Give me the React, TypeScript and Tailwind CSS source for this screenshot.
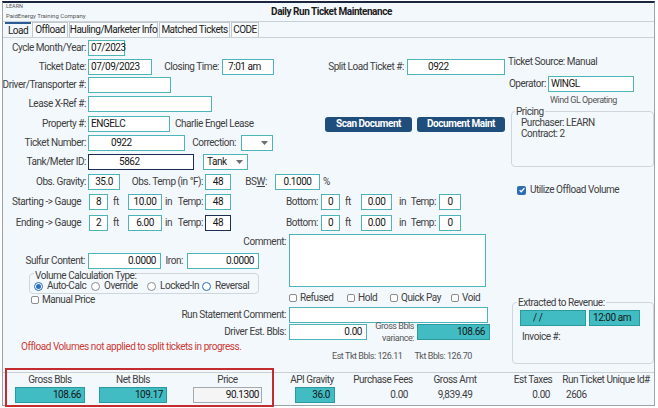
import React from "react";

type P = { cls?: string; children?: React.ReactNode };

const Lbl = ({ cls = "", children }: P) => (
  <div className={`shrink-0 flex items-center justify-end whitespace-nowrap ${cls}`}>{children}</div>
);

type InP = P & { v?: "w" | "dark" | "teal" | "gray" };
const In = ({ cls = "", v = "w", children }: InP) => {
  const skin =
    v === "teal"
      ? "bg-[#42bcc3] border-[#2a99a0]"
      : v === "dark"
      ? "bg-white border-[#1e2d52]"
      : v === "gray"
      ? "bg-[#f5f5f5] border-[#a3a9ae]"
      : "bg-white border-[#4db5b9]";
  return (
    <div className={`shrink-0 h-[16px] border flex items-center whitespace-nowrap text-[#161616] ${skin} ${cls}`}>
      {children}
    </div>
  );
};

const Arrow = () => (
  <svg width="7" height="4" viewBox="0 0 7 4" className="shrink-0">
    <path d="M0 0h7L3.5 4z" fill="#6b6b6b" />
  </svg>
);

const Btn = ({ cls = "", children }: P) => (
  <div
    className={`shrink-0 h-[15px] rounded-[3px] bg-[#1f4e7c] text-white font-bold flex items-center justify-center whitespace-nowrap ${cls}`}
  >
    {children}
  </div>
);

const Radio = ({ cls = "", on = false, ring = false, children }: P & { on?: boolean; ring?: boolean }) => (
  <div className={`shrink-0 flex items-center whitespace-nowrap ${cls}`}>
    <div
      className={`w-[9px] h-[9px] rounded-full border bg-white flex items-center justify-center ${
        on || ring ? "border-[#2a6fc0]" : "border-[#8d8d8d]"
      }`}
    >
      {on && <div className="w-[5px] h-[5px] rounded-full bg-[#2a6fc0]" />}
    </div>
    <span className="ml-[4px]">{children}</span>
  </div>
);

const Chk = ({ cls = "", children }: P) => (
  <div className={`shrink-0 flex items-center whitespace-nowrap ${cls}`}>
    <div className="w-[8px] h-[8px] rounded-[2px] border border-[#8d8d8d] bg-white" />
    <span className="ml-[3px]">{children}</span>
  </div>
);

const Tab = ({ cls = "", children }: P) => (
  <div
    className={`shrink-0 h-[15px] border-t border-x border-[#c2c8ce] bg-[#f8fafc] flex items-center justify-center whitespace-nowrap text-[#222] ${cls}`}
  >
    {children}
  </div>
);

const GaugeRow = ({ name, ft, inch, temp, dark, cls }: { name: string; ft: string; inch: string; temp: string; dark?: boolean; cls: string }) => (
  <div className={`h-[16px] flex items-center ${cls}`}>
    <Lbl cls="w-[78px]">{name}</Lbl>
    <In cls="ml-[8px] w-[19px] justify-center">{ft}</In>
    <span className="ml-[5px] w-[10px] shrink-0">ft</span>
    <In cls="ml-[5px] w-[34px] justify-center">{inch}</In>
    <span className="ml-[3px] w-[12px] shrink-0">in</span>
    <Lbl cls="w-[26px]">Temp:</Lbl>
    <In v={dark ? "dark" : "w"} cls="ml-[2px] w-[26px] justify-center">
      {temp}
    </In>
    <Lbl cls="w-[87px]">Bottom:</Lbl>
    <In cls="ml-[3px] w-[19px] justify-center">0</In>
    <span className="ml-[5px] w-[11px] shrink-0">ft</span>
    <In cls="ml-[5px] w-[31px] justify-center">0.00</In>
    <span className="ml-[7px] w-[12px] shrink-0">in</span>
    <Lbl cls="w-[25px]">Temp:</Lbl>
    <In cls="ml-[3px] w-[22px] justify-center">0</In>
  </div>
);

export default function App() {
  return (
    <div className="w-[658px] h-[408px] bg-white relative overflow-hidden font-['Roboto',sans-serif] tracking-[-0.45px] text-[10px] leading-[12px] text-[#404040]">
      <div className="ml-[2px] mt-[1px] w-[653px] h-[405px] bg-[#f3f8fc] border-t-2 border-t-[#1d2640] border-x border-x-[#9ca3ab] border-b border-b-[#9ca3ab] flex flex-col">
        {/* header */}
        <div className="h-[19px] shrink-0 border-b border-[#c9d0d8] grid grid-cols-[1fr_auto_1fr]">
          <div className="pl-[3px] flex flex-col text-[#555] tracking-normal">
            <div className="text-[5.5px] leading-[7px]">LEARN</div>
            <div className="text-[6px] leading-[8px] mt-[2px] whitespace-nowrap">PaidEnergy Training Company</div>
          </div>
          <div className="pl-[6px] flex items-center font-bold text-[10px] tracking-[-0.45px] text-[#1b1b1b] whitespace-nowrap">
            Daily Run Ticket Maintenance
          </div>
          <div />
        </div>

        {/* tabs */}
        <div className="h-[16px] shrink-0 border-b border-[#c9d0d8] flex items-end tracking-[-0.5px]">
          <div className="ml-[2px] w-[26px] h-[15px] border-t-2 border-[#2b5c94] flex items-center justify-center text-[#222]">
            Load
          </div>
          <Tab cls="ml-[1px] w-[36px]">Offload</Tab>
          <Tab cls="ml-[1px] w-[89px]">Hauling/Marketer Info</Tab>
          <Tab cls="ml-[1px] w-[71px]">Matched Tickets</Tab>
          <Tab cls="ml-[1px] w-[28px]">CODE</Tab>
        </div>

        {/* form */}
        <div className="h-[334px] shrink-0 flex">
          {/* left column */}
          <div className="w-[505px] shrink-0 flex flex-col">
            <div className="mt-[2px] h-[16px] flex items-center">
              <Lbl cls="w-[83px]">Cycle Month/Year:</Lbl>
              <In cls="ml-[2px] w-[37px] pl-[2px]">07/2023</In>
            </div>
            <div className="mt-[3px] h-[16px] flex items-center">
              <Lbl cls="w-[83px]">Ticket Date:</Lbl>
              <In cls="ml-[2px] w-[64px] pl-[2px]">07/09/2023</In>
              <Lbl cls="w-[67px]">Closing Time:</Lbl>
              <In cls="ml-[3px] w-[52px] pl-[5px]">7:01 am</In>
              <Lbl cls="w-[130px]">Split Load Ticket #:</Lbl>
              <In cls="ml-[3px] w-[98px] pl-[20px]">0922</In>
            </div>
            <div className="mt-[2px] h-[16px] flex items-center">
              <Lbl cls="w-[83px]">Driver/Transporter #:</Lbl>
              <In cls="ml-[2px] w-[83px]" />
            </div>
            <div className="mt-[3px] h-[16px] flex items-center">
              <Lbl cls="w-[83px]">Lease X-Ref #:</Lbl>
              <In cls="ml-[2px] w-[124px]" />
            </div>
            <div className="mt-[4px] h-[16px] flex items-center">
              <Lbl cls="w-[83px]">Property #:</Lbl>
              <In cls="ml-[2px] w-[82px] pl-[2px]">ENGELC</In>
              <div className="ml-[5px] w-[150px] shrink-0 whitespace-nowrap">Charlie Engel Lease</div>
              <Btn cls="w-[87px]">Scan Document</Btn>
              <Btn cls="ml-[5px] w-[88px]">Document Maint</Btn>
            </div>
            <div className="mt-[3px] h-[16px] flex items-center">
              <Lbl cls="w-[83px]">Ticket Number:</Lbl>
              <In cls="ml-[2px] w-[97px] pl-[22px]">0922</In>
              <Lbl cls="w-[51px]">Correction:</Lbl>
              <In cls="ml-[5px] w-[32px] justify-end pr-[4px]">
                <Arrow />
              </In>
            </div>
            <div className="mt-[3px] h-[16px] flex items-center">
              <Lbl cls="w-[83px]">Tank/Meter ID:</Lbl>
              <In v="dark" cls="ml-[2px] w-[106px] pl-[30px]">
                5862
              </In>
              <In cls="ml-[9px] w-[45px] pl-[3px] pr-[4px] justify-between">
                <span>Tank</span>
                <Arrow />
              </In>
            </div>
            <div className="mt-[4px] h-[16px] flex items-center">
              <Lbl cls="w-[83px]">Obs. Gravity:</Lbl>
              <In cls="ml-[2px] w-[32px] justify-center">35.0</In>
              <Lbl cls="w-[83px]">Obs. Temp (in °F):</Lbl>
              <In cls="ml-[2px] w-[26px] justify-center">48</In>
              <Lbl cls="w-[36px]">
                BS<span className="underline">W</span>:
              </Lbl>
              <In cls="ml-[8px] w-[45px] justify-center">0.1000</In>
              <span className="ml-[3px]">%</span>
            </div>
            <GaugeRow cls="mt-[4px]" name="Starting -> Gauge" ft="8" inch="10.00" temp="48" />
            <GaugeRow cls="mt-[5px]" name="Ending -> Gauge" ft="2" inch="6.00" temp="48" dark />

            {/* block A */}
            <div className="mt-[3px] flex">
              <div className="w-[283px] shrink-0 flex flex-col">
                <Lbl cls="h-[16px]">Comment:</Lbl>
                <div className="mt-[3px] h-[16px] flex items-center">
                  <Lbl cls="w-[82px]">Sulfur Content:</Lbl>
                  <In cls="ml-[3px] w-[73px] justify-end pr-[4px]">0.0000</In>
                  <Lbl cls="w-[22px]">Iron:</Lbl>
                  <In cls="ml-[4px] w-[72px] justify-end pr-[4px]">0.0000</In>
                </div>
                <div className="mt-[4px] ml-[26px] w-[230px] h-[21px] shrink-0 relative border border-[#cfd6dd] rounded-[4px] flex items-end pb-[1px] pl-[4px]">
                  <div className="absolute top-[-4px] left-[4px] px-[1px] bg-[#f3f8fc] leading-[11px] whitespace-nowrap">
                    Volume Calculation Type:
                  </div>
                  <div className="h-[12px] flex items-center">
                    <Radio on cls="w-[57px]">Auto-Calc</Radio>
                    <Radio cls="w-[56px]">Override</Radio>
                    <Radio cls="w-[55px]">Locked-In</Radio>
                    <Radio ring>Reversal</Radio>
                  </div>
                </div>
                <Chk cls="mt-[1px] ml-[28px] h-[10px]">Manual Price</Chk>
              </div>
              <div className="flex flex-col">
                <div className="ml-[3px] w-[197px] h-[53px] bg-white border border-[#4db5b9]" />
                <div className="mt-[6px] h-[10px] flex items-center">
                  <Chk cls="ml-[3px] w-[58px]">Refused</Chk>
                  <Chk cls="w-[43px]">Hold</Chk>
                  <Chk cls="w-[61px]">Quick Pay</Chk>
                  <Chk>Void</Chk>
                </div>
              </div>
            </div>

            {/* block B */}
            <div className="mt-[2px] h-[16px] flex items-center">
              <Lbl cls="w-[283px]">Run Statement Comment:</Lbl>
              <In cls="ml-[3px] w-[199px]" />
            </div>
            <div className="mt-[1px] h-[16px] flex items-center">
              <Lbl cls="w-[283px]">Driver Est. Bbls:</Lbl>
              <In cls="ml-[3px] w-[78px] justify-end pr-[4px]">0.00</In>
              <div className="w-[47px] shrink-0 flex flex-col items-end text-[9px] leading-[12px] text-[#555] whitespace-nowrap">
                <span>Gross Bbls</span>
                <span>variance:</span>
              </div>
              <In v="teal" cls="ml-[3px] w-[73px] h-[15px] justify-end pr-[4px]">
                108.66
              </In>
            </div>
            <div className="flex items-start">
              <div className="mt-[1px] ml-[18px] w-[311px] shrink-0 text-[#cc3a36] whitespace-nowrap">
                Offload Volumes not applied to split tickets in progress.
              </div>
              <div className="mt-[10px] text-[9px] text-[#555] whitespace-nowrap">
                <span>Est Tkt Bbls: 126.11</span>
                <span className="ml-[12px]">Tkt Bbls: 126.70</span>
              </div>
            </div>
          </div>

          {/* right column */}
          <div className="w-[146px] shrink-0 flex flex-col">
            <div className="mt-[18px] h-[12px] whitespace-nowrap">Ticket Source: Manual</div>
            <div className="mt-[8px] h-[16px] flex items-center">
              <Lbl cls="w-[38px]">Operator:</Lbl>
              <In cls="ml-[2px] w-[86px] pl-[2px]">WINGL</In>
            </div>
            <div className="mt-[3px] h-[10px] ml-[42px] text-[9px] leading-[10px] text-[#555] whitespace-nowrap">
              Wind GL Operating
            </div>
            <div className="mt-[6px] ml-[3px] w-[143px] h-[56px] relative border border-[#cfd6dd] rounded-[4px] flex flex-col pl-[9px] pt-[5px] leading-[11px]">
              <div className="absolute top-[-6px] left-[3px] px-[1px] bg-[#f3f8fc] leading-[11px]">Pricing</div>
              <span>Purchaser: LEARN</span>
              <span>Contract: 2</span>
            </div>
            <div className="mt-[18px] ml-[9px] h-[10px] flex items-center whitespace-nowrap">
              <div className="w-[9px] h-[9px] rounded-[2px] bg-[#2d6db5] flex items-center justify-center">
                <svg viewBox="0 0 10 10" width="8" height="8">
                  <path d="M2 5.2l2 2L8 2.8" stroke="white" strokeWidth="1.6" fill="none" />
                </svg>
              </div>
              <span className="ml-[4px]">Utilize Offload Volume</span>
            </div>
            <div className="mt-[107px] ml-[4px] w-[142px] h-[62px] relative border border-[#cfd6dd] rounded-[4px] flex flex-col pl-[7px] pt-[7px]">
              <div className="absolute top-[-6px] left-[4px] px-[1px] bg-[#f3f8fc] leading-[11px] whitespace-nowrap">
                Extracted to Revenue:
              </div>
              <div className="flex">
                <In v="teal" cls="w-[66px] h-[15px] pl-[12px]">
                  / /
                </In>
                <In v="teal" cls="ml-[3px] w-[51px] h-[15px] pl-[3px]">
                  12:00 am
                </In>
              </div>
              <div className="mt-[4px] ml-[2px] h-[13px] flex items-center">Invoice #:</div>
            </div>
          </div>
        </div>

        {/* bottom summary */}
        <div className="flex-1 border-t border-[#c9d0d8] flex">
          <div className="ml-[12px] w-[70px] shrink-0 flex flex-col">
            <div className="mt-[1px] h-[12px] flex justify-center whitespace-nowrap">Gross Bbls</div>
            <In v="teal" cls="mt-[1px] h-[15px] justify-end pr-[3px]">
              108.66
            </In>
          </div>
          <div className="ml-[14px] w-[68px] shrink-0 flex flex-col">
            <div className="mt-[1px] h-[12px] flex justify-center whitespace-nowrap">Net Bbls</div>
            <In v="teal" cls="mt-[1px] h-[15px] justify-end pr-[3px]">
              109.17
            </In>
          </div>
          <div className="ml-[26px] w-[69px] shrink-0 flex flex-col">
            <div className="mt-[1px] h-[12px] flex justify-center whitespace-nowrap">Price</div>
            <In v="gray" cls="mt-[1px] h-[15px] justify-end pr-[2px]">
              90.1300
            </In>
          </div>
          <div className="ml-[24px] w-[52px] shrink-0 flex flex-col">
            <div className="mt-[1px] h-[12px] flex justify-center whitespace-nowrap">API Gravity</div>
            <In v="teal" cls="mt-[1px] ml-[9px] w-[40px] h-[15px] justify-end pr-[4px]">
              36.0
            </In>
          </div>
          <div className="ml-[18px] w-[54px] shrink-0 flex flex-col">
            <div className="mt-[1px] h-[12px] flex justify-center whitespace-nowrap">Purchase Fees</div>
            <div className="mt-[1px] h-[15px] flex items-center justify-end pr-[2px]">0.00</div>
          </div>
          <div className="ml-[25px] w-[40px] shrink-0 flex flex-col">
            <div className="mt-[1px] h-[12px] flex justify-center whitespace-nowrap">Gross Amt</div>
            <div className="mt-[1px] h-[15px] flex items-center justify-center whitespace-nowrap">9,839.49</div>
          </div>
          <div className="ml-[41px] w-[34px] shrink-0 flex flex-col">
            <div className="mt-[1px] h-[12px] flex justify-center whitespace-nowrap">Est Taxes</div>
            <div className="mt-[1px] h-[15px] flex items-center justify-end">0.00</div>
          </div>
          <div className="ml-[16px] w-[80px] shrink-0 flex flex-col">
            <div className="mt-[1px] h-[12px] flex justify-center whitespace-nowrap">Run Ticket Unique Id#</div>
            <div className="mt-[1px] h-[15px] flex items-center">2606</div>
          </div>
        </div>
      </div>

      {/* annotation overlay */}
      <div className="absolute left-[5px] top-[368px] w-[269px] h-[39px] border-2 border-[#c42b2f] pointer-events-none" />
    </div>
  );
}
